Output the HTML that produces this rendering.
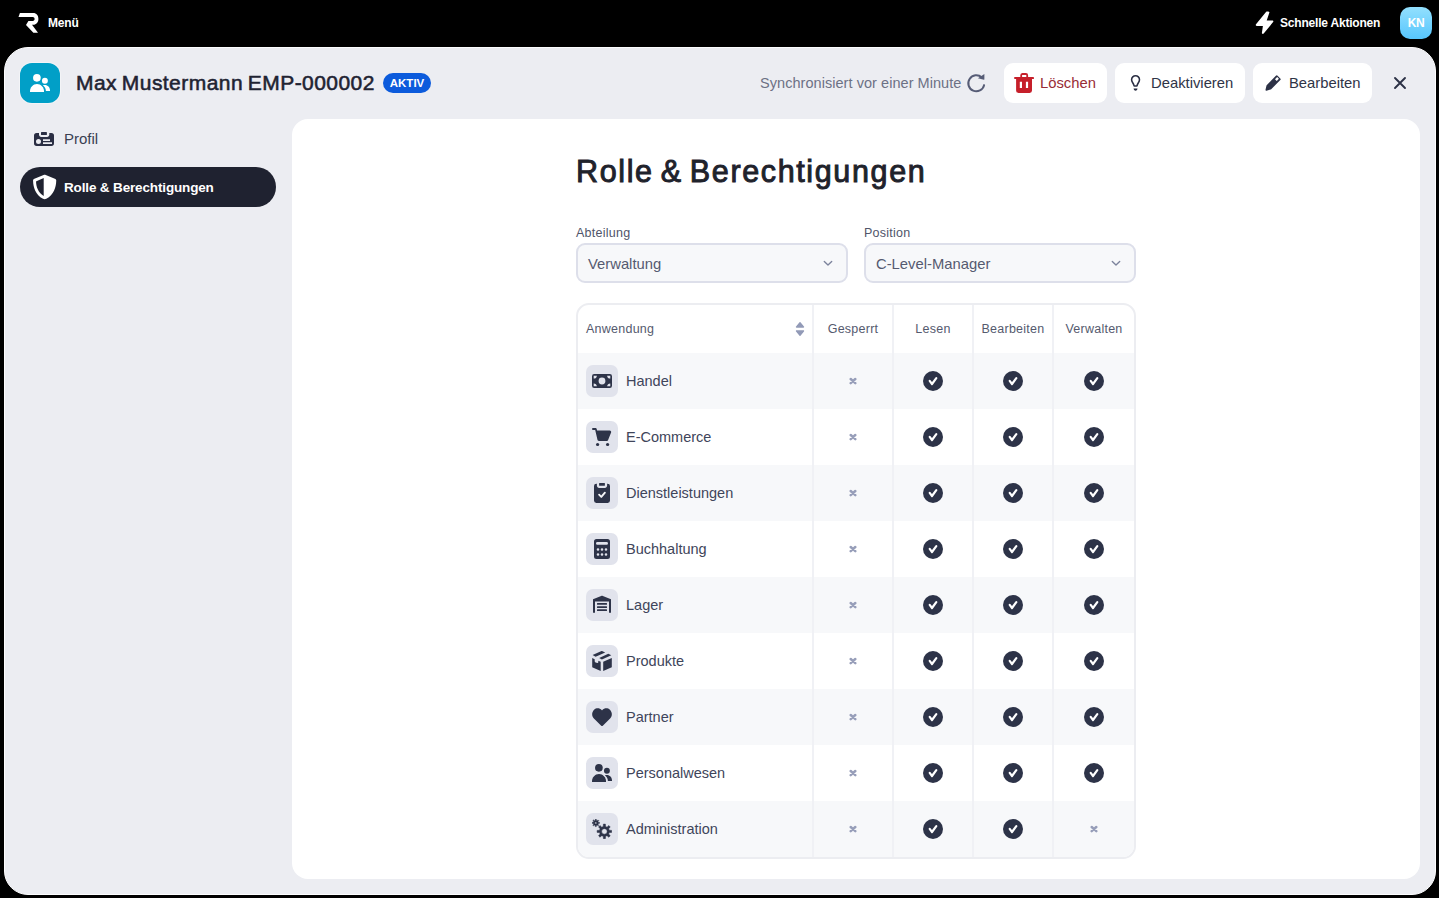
<!DOCTYPE html>
<html lang="de">
<head>
<meta charset="utf-8">
<title>Rolle &amp; Berechtigungen</title>
<style>
*{box-sizing:border-box;margin:0;padding:0}
html,body{width:1439px;height:898px;overflow:hidden;background:#000}
body{font-family:"Liberation Sans",sans-serif;color:#2f3447;position:relative;-webkit-font-smoothing:antialiased}
.abs{position:absolute}
svg{display:block}
/* top bar */
#topbar{position:absolute;left:0;top:0;width:1439px;height:47px;background:#000;color:#fff}
#logo{position:absolute;left:18px;top:13px;width:21px;height:20px}
#menu{position:absolute;left:48px;top:15px;font-size:12px;font-weight:700;line-height:16px;letter-spacing:-0.2px}
#bolt{position:absolute;left:1255px;top:11px;width:19px;height:23px}
#quick{position:absolute;left:1280px;top:15px;font-size:12px;font-weight:700;line-height:16px;letter-spacing:-0.2px;white-space:nowrap}
#avatar{position:absolute;left:1400px;top:7px;width:32px;height:32px;border-radius:10px;background:linear-gradient(180deg,#93e0fe 0%,#57c6fd 100%);color:#fff;font-size:12px;font-weight:700;letter-spacing:-0.4px;text-align:center;line-height:33px}
/* panel */
#panel{position:absolute;left:4px;top:47px;width:1432px;height:848px;border-radius:24px;background:#ecedf2;border:1px solid #fdfdfe}
#empicon{position:absolute;left:20px;top:63px;width:40px;height:40px;border-radius:12px;background:#019fc7;box-shadow:0 0 0 1px rgba(255,255,255,0.4)}
#title{position:absolute;left:76px;top:69px;font-size:21px;line-height:28px;letter-spacing:0.45px;word-spacing:-1.5px;color:#1f2332;-webkit-text-stroke:0.55px #1f2332;white-space:nowrap}
#badge{position:absolute;left:383px;top:73px;width:48px;height:20px;border-radius:10px;background:#0c5bdc;color:#fff;font-size:11.5px;font-weight:700;text-align:center;line-height:20px}
#sync{position:absolute;left:760px;top:73px;font-size:14.5px;letter-spacing:0.05px;line-height:20px;color:#6c7185;white-space:nowrap}
.btn{position:absolute;top:63px;height:40px;border-radius:9px;background:#fff;font-size:14.8px;line-height:40px;color:#2f3447;white-space:nowrap}
.btn span{position:absolute;top:0}
/* sidebar */
#nav1{position:absolute;left:64px;top:129px;font-size:15px;line-height:20px;color:#3a3f52}
#nav2{position:absolute;left:20px;top:167px;width:256px;height:40px;border-radius:20px;background:#1f2230;color:#fff}
#nav2 span{position:absolute;left:44px;top:11px;font-size:13.5px;font-weight:700;line-height:20px;letter-spacing:-0.15px;white-space:nowrap}
/* card */
#card{position:absolute;left:292px;top:119px;width:1128px;height:760px;border-radius:16px;background:#fff}
#h1{position:absolute;left:576px;top:151px;font-size:30.5px;font-weight:400;line-height:40px;letter-spacing:1.63px;word-spacing:-3px;-webkit-text-stroke:0.95px #1f222b;color:#20232c;white-space:nowrap}
.lbl{position:absolute;top:225px;font-size:12.5px;letter-spacing:0.25px;line-height:16px;color:#50556a}
.sel{position:absolute;top:243px;width:272px;height:40px;border:2px solid #dddfea;border-radius:9px;background:#f7f8fa;font-size:14.8px;line-height:38px;color:#555a70;padding-left:10px}
.sel svg{position:absolute;left:245px;top:15px}
/* table */
#tbl{position:absolute;left:576px;top:303px;width:560px;height:556px;border:2px solid #ecedf1;border-radius:13px;background:#fff;overflow:hidden}
.row{position:absolute;left:0;width:556px;height:56px}
.row.alt{background:#f7f8fa}
.vsep{position:absolute;top:0;width:2px;height:552px;background:#f0f1f5}
.th{position:absolute;top:16px;font-size:12.5px;letter-spacing:0.25px;line-height:16px;color:#555a6e;text-align:center;width:80px}
.ib{position:absolute;left:8px;top:12px;width:32px;height:32px;border-radius:7px;background:#e1e3ec}
.ib svg{position:absolute;left:6px;top:6px;width:20px;height:20px}
.nm{position:absolute;left:48px;top:18px;font-size:14.5px;line-height:20px;color:#40455a;white-space:nowrap}
.ck{position:absolute;top:18px;width:20px;height:20px}
.xx{position:absolute;top:24px;width:8px;height:8px}
</style>
</head>
<body>
<svg width="0" height="0" style="position:absolute"><defs>
<symbol id="i-money" viewBox="0 0 20 20"><path fill-rule="evenodd" d="M2.2 3h15.6A2.2 2.2 0 0 1 20 5.200v9.600A2.200 2.200 0 0 1 17.800 17H2.200A2.200 2.200 0 0 1 0 14.800V5.200A2.200 2.200 0 0 1 2.200 3ZM1.700 4.700v2.900A3.300 3.300 0 0 0 4.900 4.700ZM18.300 4.700h-3.200a3.300 3.300 0 0 0 3.200 2.900ZM1.700 15.300h3.200a3.300 3.300 0 0 0 -3.200 -2.900ZM18.300 15.300v-2.900a3.300 3.300 0 0 0 -3.200 2.900ZM10 6.600a3.400 3.400 0 1 0 0 6.800a3.400 3.400 0 1 0 0 -6.800Z"/></symbol>
<symbol id="i-cart" viewBox="0 0 20 20"><path d="M1 0.900h2.400c0.700 0 1.200 0.500 1.350 1.100L5 3.400h12.700c1.100 0 1.800 1 1.400 2l-3 7.500c-0.250 0.650-0.800 1.100-1.500 1.100H6.900c-0.700 0-1.300-0.500-1.450-1.200L3.200 2.900H1a1 1 0 0 1 0-2Z"/><circle cx="5.600" cy="17.500" r="1.600"/><circle cx="15.600" cy="17.500" r="1.600"/></symbol>
<symbol id="i-clip" viewBox="0 0 20 20"><path fill-rule="evenodd" d="M4.400 0.700h0.500v2c0 1.200 1 2.200 2.200 2.200h5.800c1.200 0 2.200-1 2.200-2.200v-2h0.500A2.400 2.400 0 0 1 18 3.100v14.500A2.400 2.400 0 0 1 15.600 20H4.400A2.400 2.400 0 0 1 2 17.600V3.100A2.400 2.400 0 0 1 4.400 0.700Z"/><rect x="7.100" y="0" width="5.800" height="2.800" rx="0.600"/><path d="M7.100 11.700 9.300 13.900 12.900 9.700" fill="none" stroke="#f4f5f8" stroke-width="1.900" stroke-linecap="round" stroke-linejoin="round"/></symbol>
<symbol id="i-calc" viewBox="0 0 20 20"><path fill-rule="evenodd" d="M4.500 0h11A2.500 2.500 0 0 1 18 2.500v15A2.500 2.500 0 0 1 15.500 20h-11A2.500 2.500 0 0 1 2 17.500v-15A2.500 2.500 0 0 1 4.500 0ZM5.400 3a1.400 1.400 0 0 0 0 2.800h9.200a1.400 1.400 0 0 0 0 -2.800ZM6 9.200a1.300 1.300 0 1 0 0 2.600a1.300 1.300 0 1 0 0 -2.600ZM10 9.200a1.300 1.300 0 1 0 0 2.600a1.300 1.300 0 1 0 0 -2.600ZM14 9.200a1.300 1.300 0 1 0 0 2.600a1.300 1.300 0 1 0 0 -2.600ZM6 14.200a1.300 1.300 0 1 0 0 2.600a1.300 1.300 0 1 0 0 -2.600ZM10 14.200a1.300 1.300 0 1 0 0 2.600a1.300 1.300 0 1 0 0 -2.600ZM14 14.200a1.300 1.300 0 1 0 0 2.600a1.300 1.300 0 1 0 0 -2.600Z"/></symbol>
<symbol id="i-ware" viewBox="0 0 20 20"><path d="M10 0.800c0.300 0 0.600 0.080 0.850 0.200L19 4.300v13.500h-2V6.600H3v11.200H1V4.300L9.150 1c0.250-0.120 0.550-0.200 0.850-0.200Z"/><rect x="5" y="8.100" width="10" height="1.700" rx="0.500"/><rect x="5" y="11.200" width="10" height="1.700" rx="0.500"/><rect x="5" y="14.200" width="10" height="1.700" rx="0.500"/></symbol>
<symbol id="i-box" viewBox="0 0 20 20"><path d="M0.600 4.100 9.800 -0.100 13.200 1.400 3.600 5.650Z"/><path d="M7.200 7.100 16.300 2.800 19.300 4.200 9.900 8.500Z"/><path d="M0.200 7.100 2.700 8.200V9.900C2.700 10.600 3.100 11.200 3.700 11.400L5.300 12C5.800 12.200 6.300 11.800 6.300 11.300V9.700L8.700 10.700V19.900L0.200 16.300Z"/><path d="M11.200 10.700 19.800 7.100V16.300L11.200 19.900Z"/></symbol>
<symbol id="i-heart" viewBox="0 0 20 20"><path d="M10 19.100C9.700 19.100 9.400 19 9.200 18.800L1.900 11.600C-0.500 9.200 -0.400 5.100 2.100 2.700C4.300 0.600 7.700 0.800 9.700 3L10 3.400L10.300 3C12.300 0.800 15.700 0.600 17.900 2.700C20.400 5.100 20.500 9.200 18.100 11.600L10.800 18.800C10.600 19 10.300 19.100 10 19.100Z"/></symbol>
<symbol id="i-users" viewBox="0 0 20 20"><circle cx="6.900" cy="4.800" r="3.850"/><path d="M0 19V18.200C0 14.200 3.100 10.900 7 10.900S14 14.200 14 18.200V19Z"/><ellipse cx="14.900" cy="7.800" rx="2.950" ry="3"/><path d="M12.900 12.300C13.500 12.100 14.200 12 14.900 12C17.800 12 20 14.300 20 17.200V18H15.900C15.900 15.800 14.700 13.700 12.900 12.300Z"/></symbol>
<symbol id="i-gears" viewBox="0 0 20 20"><path fill-rule="evenodd" stroke-linejoin="round" stroke-width="0.5" stroke="currentColor" d="M11.23 7.54 L11.42 5.12 L13.38 5.12 L13.57 7.54 L15.01 8.14 L16.86 6.56 L18.24 7.94 L16.66 9.79 L17.26 11.23 L19.68 11.42 L19.68 13.38 L17.26 13.57 L16.66 15.01 L18.24 16.86 L16.86 18.24 L15.01 16.66 L13.57 17.26 L13.38 19.68 L11.42 19.68 L11.23 17.26 L9.79 16.66 L7.94 18.24 L6.56 16.86 L8.14 15.01 L7.54 13.57 L5.12 13.38 L5.12 11.42 L7.54 11.23 L8.14 9.79 L6.56 7.94 L7.94 6.56 L9.79 8.14Z M9.65 12.40 a2.75 2.75 0 1 0 5.50 0 a2.75 2.75 0 1 0 -5.50 0Z M3.20 1.42 L3.33 0.18 L4.27 0.18 L4.40 1.42 L5.13 1.73 L6.10 0.94 L6.76 1.60 L5.97 2.57 L6.28 3.30 L7.52 3.43 L7.52 4.37 L6.28 4.50 L5.97 5.23 L6.76 6.20 L6.10 6.86 L5.13 6.07 L4.40 6.38 L4.27 7.62 L3.33 7.62 L3.20 6.38 L2.47 6.07 L1.50 6.86 L0.84 6.20 L1.63 5.23 L1.32 4.50 L0.08 4.37 L0.08 3.43 L1.32 3.30 L1.63 2.57 L0.84 1.60 L1.50 0.94 L2.47 1.73Z M2.80 3.90 a1.00 1.00 0 1 0 2.00 0 a1.00 1.00 0 1 0 -2.00 0Z"/></symbol>
<symbol id="i-check" viewBox="0 0 20 20"><circle cx="10" cy="10" r="10" fill="#2d3348"/><path d="M6.700 9.900 9 13 13.300 7.200" fill="none" stroke="#fff" stroke-width="2.200" stroke-linecap="round" stroke-linejoin="round"/></symbol>
<symbol id="i-x" viewBox="0 0 8 8"><path d="M1.700 2.050 6.300 6.150M6.300 2.050 1.700 6.150" fill="none" stroke="#979eb9" stroke-width="2.500" stroke-linecap="round"/></symbol>

</defs></svg>
<div id="topbar">
  <svg id="logo" viewBox="0 0 21 20"><path d="M1.900 0H15.200C18.500 0 20.400 2.400 20.400 5.900C20.400 9.300 18.400 11.500 15.200 11.700L14 11.800L20 19.800H15.400L8 12L10.400 7.900H14.800C16 7.900 16.600 7.100 16.600 6C16.600 4.800 15.900 4 14.700 4H0.500Z" fill="#fff"/></svg>
  <div id="menu">Menü</div>
  <svg id="bolt" viewBox="0 0 19 23"><path d="M11 0.900C11.700 0.300 14.700 0.500 14.400 1.500L11.700 9.500H17.300C18.300 9.500 18.700 10.400 18.100 11.100L8.700 22.500C8 23.300 6.700 22.800 6.900 21.800L7.900 14.900H1.700C0.700 14.900 0.400 14 1 13.300Z" fill="#fff"/></svg>
  <div id="quick">Schnelle Aktionen</div>
  <div id="avatar">KN</div>
</div>
<div id="panel"></div>
<div id="empicon"></div>
<div id="title">Max Mustermann EMP-000002</div>
<div id="badge">AKTIV</div>
<div id="sync">Synchronisiert vor einer Minute</div>
<div class="btn" style="left:1004px;width:103px;color:#982c35"><span style="left:36px">Löschen</span></div>
<div class="btn" style="left:1115px;width:130px"><span style="left:36px">Deaktivieren</span></div>
<div class="btn" style="left:1253px;width:119px"><span style="left:36px">Bearbeiten</span></div>

<svg class="abs" style="left:30px;top:73px;fill:#fff" width="20" height="20"><use href="#i-users"/></svg>
<svg class="abs" style="left:34px;top:132px" width="20" height="14" viewBox="0 0 20 14"><path fill="#2a2e43" fill-rule="evenodd" d="M2.600 1H5v1.700C5 3.900 6 4.900 7.200 4.900h5.900c1.200 0 2.200-1 2.200-2.200V1h2.100A2.600 2.600 0 0 1 20 3.600v7.700A2.600 2.600 0 0 1 17.400 13.900H2.600A2.600 2.600 0 0 1 0 11.300V3.600A2.600 2.600 0 0 1 2.600 1ZM4.500 6.900a2.500 2.500 0 1 0 0 5a2.500 2.500 0 1 0 0 -5ZM9 7.200v1.700h7V7.200ZM9 10.200V12h9v-1.800Z"/><rect x="7" y="0" width="5.900" height="2.900" rx="0.500" fill="#2a2e43"/></svg>
<svg class="abs" style="left:964px;top:71px" width="24" height="24" viewBox="0 0 24 24"><path d="M20.100 14.100A8 8 0 1 1 17.800 6.500" fill="none" stroke="#565c76" stroke-width="2" stroke-linecap="round"/><path d="M20.400 3.100V8.300c0 0.250-0.200 0.400-0.450 0.350L13.900 7.300Z" fill="#565c76"/></svg>
<svg class="abs" style="left:1014px;top:73px" width="20" height="20" viewBox="0 0 20 20"><path fill="#c61f2a" fill-rule="evenodd" d="M8.300 0h3.600A2.200 2.200 0 0 1 14.100 2.200V4h5c0.550 0 1 0.450 1 1s-0.450 1-1 1H18v11.600A2.400 2.400 0 0 1 15.600 20H4.500A2.400 2.400 0 0 1 2.100 17.600V6H1.100c-0.550 0-1-0.450-1-1s0.450-1 1-1h5.200V2.200A2.200 2.200 0 0 1 8.300 0ZM8.100 2V4h4.200V2ZM5.800 8.800V15H8V8.800ZM11.900 8.800V15h2.200V8.800Z"/></svg>
<svg class="abs" style="left:1130px;top:74px" width="12" height="18" viewBox="0 0 12 18"><path d="M5.550 1.750a3.950 3.950 0 0 1 3.950 3.950c0 1.350-0.600 2.300-1.250 3.250-0.500 0.750-1 1.500-1.100 2.500-0.030 0.350-0.300 0.600-0.650 0.600H4.600c-0.350 0-0.620-0.250-0.650-0.600-0.100-1-0.600-1.750-1.100-2.500C2.200 8 1.600 7.050 1.600 5.700A3.950 3.950 0 0 1 5.550 1.750Z" fill="none" stroke="#2a2e43" stroke-width="1.550" stroke-linejoin="round"/><path d="M3.600 14.500h3.900c0 1.200-0.850 2.200-1.950 2.200S3.600 15.700 3.600 14.500Z" fill="#2a2e43"/></svg>
<svg class="abs" style="left:1265px;top:75px" width="16" height="16" viewBox="0 0 16 16"><path fill="#2c3146" fill-rule="evenodd" d="M10.900 0.700a1.200 1.200 0 0 1 1.700 0l2.700 2.700a1.200 1.200 0 0 1 0 1.700L6.200 14.200c-0.200 0.200-0.450 0.330-0.700 0.400L1.400 15.700c-0.550 0.150-1.050-0.350-0.900-0.900L1.500 10.600c0.070-0.270 0.200-0.500 0.400-0.700ZM12.150 2.100 10 4.250 11.750 6 13.900 3.850Z"/></svg>
<svg class="abs" style="left:1393px;top:76px" width="14" height="14" viewBox="0 0 14 14"><path d="M2 2 12 12M12 2 2 12" fill="none" stroke="#2c3146" stroke-width="1.900" stroke-linecap="round"/></svg>
<div id="nav1">Profil</div>
<div id="nav2"><svg class="abs" style="left:13px;top:7px" width="24" height="26" viewBox="0 0 24 26"><path fill="#fff" fill-rule="evenodd" d="M11.600 0.700c0.400 0 0.800 0.100 1.150 0.250l9.100 3.900c1.050 0.450 1.650 1.350 1.350 2.400-0.100 5.600-2.400 13.700-9.900 17.600a3.500 3.500 0 0 1-3.300 0C2.500 20.950 0.200 12.850 0.100 7.250-0.100 6.200 0.400 5.300 1.450 4.850l9.100-3.900c0.350-0.150 0.700-0.250 1.050-0.250ZM10.700 4.100 3.400 7.300c-0.250 0.100-0.350 0.300-0.350 0.550 0.150 4.600 1.900 10.900 7.650 14.100Z"/></svg><span>Rolle &amp; Berechtigungen</span></div>
<div id="card"></div>
<div id="h1">Rolle &amp; Berechtigungen</div>
<div class="lbl" style="left:576px">Abteilung</div>
<div class="lbl" style="left:864px">Position</div>
<div class="sel" style="left:576px">Verwaltung<svg width="10" height="7" viewBox="0 0 10 7"><path d="M1.300 1.400 5 5 8.700 1.400" fill="none" stroke="#7c839c" stroke-width="1.350" stroke-linecap="round" stroke-linejoin="round"/></svg></div>
<div class="sel" style="left:864px">C-Level-Manager<svg width="10" height="7" viewBox="0 0 10 7"><path d="M1.300 1.400 5 5 8.700 1.400" fill="none" stroke="#7c839c" stroke-width="1.350" stroke-linecap="round" stroke-linejoin="round"/></svg></div>
<div id="tbl">
<div class="th" style="left:8px;width:auto;text-align:left">Anwendung</div>
<svg class="abs" style="left:217px;top:16px" width="10" height="16" viewBox="0 0 10 16"><path d="M1.500 6.700h7c0.600 0 0.900-0.700 0.500-1.150L5.500 1.300a0.700 0.700 0 0 0 -1 0L1 5.550C0.600 6 0.900 6.700 1.500 6.700Z" fill="#929ab7"/><path d="M1.500 9.300h7c0.600 0 0.900 0.700 0.500 1.150L5.500 14.700a0.700 0.700 0 0 1 -1 0L1 10.450C0.600 10 0.900 9.300 1.500 9.300Z" fill="#929ab7"/></svg>
<div class="th" style="left:235px">Gesperrt</div>
<div class="th" style="left:315px">Lesen</div>
<div class="th" style="left:395px">Bearbeiten</div>
<div class="th" style="left:476px">Verwalten</div>
<div class="row alt" style="top:48px"><div class="ib"><svg style="color:#2d3348;fill:#2d3348"><use href="#i-money"/></svg></div><div class="nm">Handel</div><svg class="xx" style="left:271px"><use href="#i-x"/></svg><svg class="ck" style="left:345px"><use href="#i-check"/></svg><svg class="ck" style="left:425px"><use href="#i-check"/></svg><svg class="ck" style="left:506px"><use href="#i-check"/></svg></div>
<div class="row" style="top:104px"><div class="ib"><svg style="color:#2d3348;fill:#2d3348"><use href="#i-cart"/></svg></div><div class="nm">E-Commerce</div><svg class="xx" style="left:271px"><use href="#i-x"/></svg><svg class="ck" style="left:345px"><use href="#i-check"/></svg><svg class="ck" style="left:425px"><use href="#i-check"/></svg><svg class="ck" style="left:506px"><use href="#i-check"/></svg></div>
<div class="row alt" style="top:160px"><div class="ib"><svg style="color:#2d3348;fill:#2d3348"><use href="#i-clip"/></svg></div><div class="nm">Dienstleistungen</div><svg class="xx" style="left:271px"><use href="#i-x"/></svg><svg class="ck" style="left:345px"><use href="#i-check"/></svg><svg class="ck" style="left:425px"><use href="#i-check"/></svg><svg class="ck" style="left:506px"><use href="#i-check"/></svg></div>
<div class="row" style="top:216px"><div class="ib"><svg style="color:#2d3348;fill:#2d3348"><use href="#i-calc"/></svg></div><div class="nm">Buchhaltung</div><svg class="xx" style="left:271px"><use href="#i-x"/></svg><svg class="ck" style="left:345px"><use href="#i-check"/></svg><svg class="ck" style="left:425px"><use href="#i-check"/></svg><svg class="ck" style="left:506px"><use href="#i-check"/></svg></div>
<div class="row alt" style="top:272px"><div class="ib"><svg style="color:#2d3348;fill:#2d3348"><use href="#i-ware"/></svg></div><div class="nm">Lager</div><svg class="xx" style="left:271px"><use href="#i-x"/></svg><svg class="ck" style="left:345px"><use href="#i-check"/></svg><svg class="ck" style="left:425px"><use href="#i-check"/></svg><svg class="ck" style="left:506px"><use href="#i-check"/></svg></div>
<div class="row" style="top:328px"><div class="ib"><svg style="color:#2d3348;fill:#2d3348"><use href="#i-box"/></svg></div><div class="nm">Produkte</div><svg class="xx" style="left:271px"><use href="#i-x"/></svg><svg class="ck" style="left:345px"><use href="#i-check"/></svg><svg class="ck" style="left:425px"><use href="#i-check"/></svg><svg class="ck" style="left:506px"><use href="#i-check"/></svg></div>
<div class="row alt" style="top:384px"><div class="ib"><svg style="color:#2d3348;fill:#2d3348"><use href="#i-heart"/></svg></div><div class="nm">Partner</div><svg class="xx" style="left:271px"><use href="#i-x"/></svg><svg class="ck" style="left:345px"><use href="#i-check"/></svg><svg class="ck" style="left:425px"><use href="#i-check"/></svg><svg class="ck" style="left:506px"><use href="#i-check"/></svg></div>
<div class="row" style="top:440px"><div class="ib"><svg style="color:#2d3348;fill:#2d3348"><use href="#i-users"/></svg></div><div class="nm">Personalwesen</div><svg class="xx" style="left:271px"><use href="#i-x"/></svg><svg class="ck" style="left:345px"><use href="#i-check"/></svg><svg class="ck" style="left:425px"><use href="#i-check"/></svg><svg class="ck" style="left:506px"><use href="#i-check"/></svg></div>
<div class="row alt" style="top:496px"><div class="ib"><svg style="color:#2d3348;fill:#2d3348"><use href="#i-gears"/></svg></div><div class="nm">Administration</div><svg class="xx" style="left:271px"><use href="#i-x"/></svg><svg class="ck" style="left:345px"><use href="#i-check"/></svg><svg class="ck" style="left:425px"><use href="#i-check"/></svg><svg class="xx" style="left:512px"><use href="#i-x"/></svg></div>
<div class="vsep" style="left:234px"></div>
<div class="vsep" style="left:314px"></div>
<div class="vsep" style="left:394px"></div>
<div class="vsep" style="left:474px"></div>
</div>
</body>
</html>
